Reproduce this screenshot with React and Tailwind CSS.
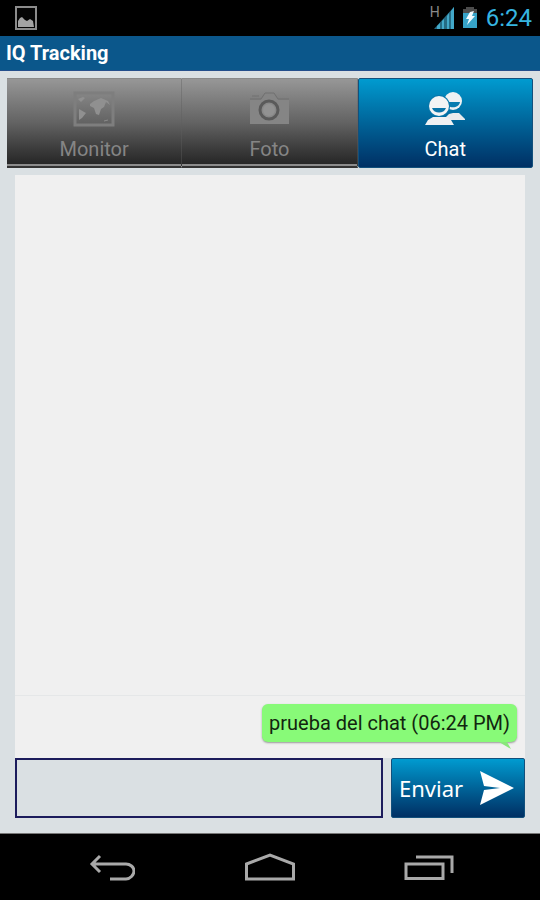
import React, { useState } from "react";
import clsx from "clsx";

const PictureIcon = () => (
  <svg width="24" height="24" viewBox="0 0 24 24" aria-hidden="true">
    <rect x="2" y="1" width="20" height="22" fill="#050505" stroke="#8c8c8c" strokeWidth="2" />
    <path d="M4 21v-6l2-3 2-1 3 3 2 1 3-2 3 2 1 6z" fill="#a3a3a3" />
  </svg>
);

const SignalIcon = () => (
  <svg width="22" height="24" viewBox="0 0 22 24" aria-hidden="true">
    <path d="M2 23L22 1v22z" fill="#256b84" />
    <path d="M5 23v-3l3-3v6zM10 23v-8l2-2v10zM15 23V10l2-3v16zM19 23V5l3-4v22z" fill="#42a8c9" />
  </svg>
);

const BatteryIcon = () => (
  <svg width="16" height="22" viewBox="0 0 16 22" aria-hidden="true">
    <path d="M4 0h8v2h3v5H1V2h3z" fill="#4c4c4c" />
    <path d="M1 6h14v15H1z" fill="#36a3c8" />
    <path d="M8 5l4-1-2 5h3l-8 9 2-6H4z" fill="#f2fbff" />
  </svg>
);

const MapIcon = () => (
  <svg width="42" height="36" viewBox="0 0 42 36" aria-hidden="true">
    <rect x="2" y="2" width="38" height="32" fill="none" stroke="#7e7e7e" strokeWidth="3" />
    <path d="M5 8l5-2 2 1-4 4zM6 18l7 4-4 5-3 2zM17 13l4-3 7-3 7 3 2 4-4-3-2 5-3 2-2 6-3-1-2-6-4-2z" fill="#909090" />
    <path d="M31 30l4-1" stroke="#8b8b8b" />
  </svg>
);

const CameraIcon = () => (
  <svg width="42" height="36" viewBox="0 0 42 36" aria-hidden="true">
    <path d="M2 9h11l4-6h9l4 6h11v24H2z" fill="#858585" />
    <path d="M4 5h7M2 8h11l4-6h9l4 6h11" fill="none" stroke="#707070" strokeWidth="1" />
    <circle cx="21" cy="19" r="9" fill="#888" stroke="#5a5a5a" strokeWidth="3" />
    <circle cx="21" cy="19" r="6" fill="#929292" />
  </svg>
);

const PeopleIcon = () => (
  <svg width="42" height="36" viewBox="0 0 42 36" aria-hidden="true">
    <path d="M20 28l5-5 4-1h6l6 6v1H20z" fill="#e8eaec" />
    <circle cx="29" cy="10" r="9" fill="#eef1f3" />
    <path d="M22 11h14c-1 7-13 7-14 0z" fill="#087cb0" />
    <path d="M1 34l3-5 5-3h13l5 3 3 5z" fill="#eef0f2" />
    <circle cx="15" cy="15" r="11" fill="#0876aa" />
    <circle cx="15" cy="15" r="10" fill="#f3f4f5" />
    <path d="M8 17h14c-2 6-12 6-14 0z" fill="#0874a8" />
  </svg>
);

const SendIcon = () => (
  <svg width="34" height="34" viewBox="0 0 34 34" aria-hidden="true">
    <path d="M0 0l34 17L0 34l4-15 16-2-16-2z" fill="#fff" />
  </svg>
);

const BackIcon = () => (
  <svg width="48" height="28" viewBox="0 0 48 28" fill="none" stroke="#a9a9a9" strokeWidth="3" aria-hidden="true">
    <path d="M13 3L5 11l8 8M5 11h34c4 0 8 3 8 7s-4 8-8 8H23" />
  </svg>
);

const HomeIcon = () => (
  <svg width="52" height="28" viewBox="0 0 52 28" fill="none" stroke="#a9a9a9" strokeWidth="3" aria-hidden="true">
    <path d="M2.500 11L26 2l23.500 9v15h-47z" />
  </svg>
);

const RecentsIcon = () => (
  <svg width="50" height="28" viewBox="0 0 50 28" fill="none" stroke="#a9a9a9" strokeWidth="3" aria-hidden="true">
    <rect x="2" y="11" width="37" height="14.500" />
    <path d="M12 4h36v16" />
  </svg>
);

const tabs = [
  { id: "monitor", label: "Monitor", Icon: MapIcon },
  { id: "foto", label: "Foto", Icon: CameraIcon },
  { id: "chat", label: "Chat", Icon: PeopleIcon },
];

function Tab({ label, Icon, active, onClick }) {
  return (
    <button
      role="tab"
      aria-selected={active}
      onClick={onClick}
      className={clsx(
        "flex flex-col items-center gap-2 border pt-3 text-xl leading-7",
        active
          ? "rounded-xs border-[#12507c] bg-linear-to-b from-[#009bd0] to-[#003064] text-white"
          : "border-l-0 border-r-[#5f5f5f]/40 border-t-[#8a8a8a] border-b-2 border-b-[#333] bg-linear-to-b from-[#979797] via-[#636363] to-[#242424] text-[#858585] shadow-[inset_0_-2px_0_#8c8c8c]"
      )}
    >
      <Icon />
      {label}
    </button>
  );
}

export default function App() {
  const [activeTab, setActiveTab] = useState("chat");
  const [draft, setDraft] = useState("");
  const [messages, setMessages] = useState([{ text: "prueba del chat", time: "06:24 PM" }]);

  const send = (e) => {
    e.preventDefault();
    if (!draft.trim()) return;
    setMessages([...messages, { text: draft, time: "06:24 PM" }]);
    setDraft("");
  };

  return (
    <div className="flex min-h-screen flex-col bg-[#dae0e3] font-[Roboto,sans-serif]">
      <div className="flex h-9 items-center justify-between bg-black pr-2 pl-3.5">
        <PictureIcon />
        <div className="flex items-center gap-2 text-2xl text-[#36b5e0]">
          <div className="flex items-start">
            <span className="-mr-2 text-sm leading-3 text-[#8a8a8a]">H</span>
            <SignalIcon />
          </div>
          <BatteryIcon />
          <span>6:24</span>
        </div>
      </div>

      <header className="flex h-[35px] items-center border-b border-[#244f8c] bg-[#0b578b] px-1.5">
        <h1 className="text-xl font-bold text-white">IQ Tracking</h1>
      </header>

      <main className="flex flex-1 flex-col px-[7px] pt-[7px] pb-[15px]">
        <div role="tablist" className="grid h-[90px] grid-cols-3">
          {tabs.map((tab) => (
            <Tab key={tab.id} {...tab} active={tab.id === activeTab} onClick={() => setActiveTab(tab.id)} />
          ))}
        </div>

        <div className="mx-2 mt-[7px] flex flex-1 flex-col justify-end bg-[#f0f0f0]">
          {messages.map((m, i) => (
            <div key={i} className="flex justify-end border-t border-[#e5e7e8] pt-2 pr-2 pb-4">
              <div className="relative rounded-md bg-[#88fa78] px-[7px] py-1.5 text-xl leading-[26px] text-[#12250f] shadow-[0_1px_2px_#999]">
                {m.text} ({m.time})
                <svg className="absolute top-full right-1.5" width="12" height="7" viewBox="0 0 12 7" aria-hidden="true">
                  <path d="M0 0h8l4 7z" fill="#88e67b" />
                </svg>
              </div>
            </div>
          ))}
        </div>

        <form onSubmit={send} className="mx-2 flex h-[60px] gap-2">
          <input
            type="text"
            aria-label="Mensaje"
            value={draft}
            onChange={(e) => setDraft(e.target.value)}
            className="min-w-0 flex-1 border-2 border-[#1c1c5c] bg-[#dae0e3] px-3 text-xl text-[#222] outline-none"
          />
          <button
            type="submit"
            className="flex w-[134px] items-center justify-between rounded-xs border border-[#12507c] bg-linear-to-b from-[#009bd0] to-[#003064] pr-2.5 pl-[7px] font-['Noto_Sans',sans-serif] text-[22px] text-white"
          >
            Enviar
            <SendIcon />
          </button>
        </form>
      </main>

      <nav className="grid h-[67px] grid-cols-3 place-items-center border-t border-[#777] bg-black px-8">
        <button aria-label="Atrás"><BackIcon /></button>
        <button aria-label="Inicio"><HomeIcon /></button>
        <button aria-label="Recientes"><RecentsIcon /></button>
      </nav>
    </div>
  );
}
